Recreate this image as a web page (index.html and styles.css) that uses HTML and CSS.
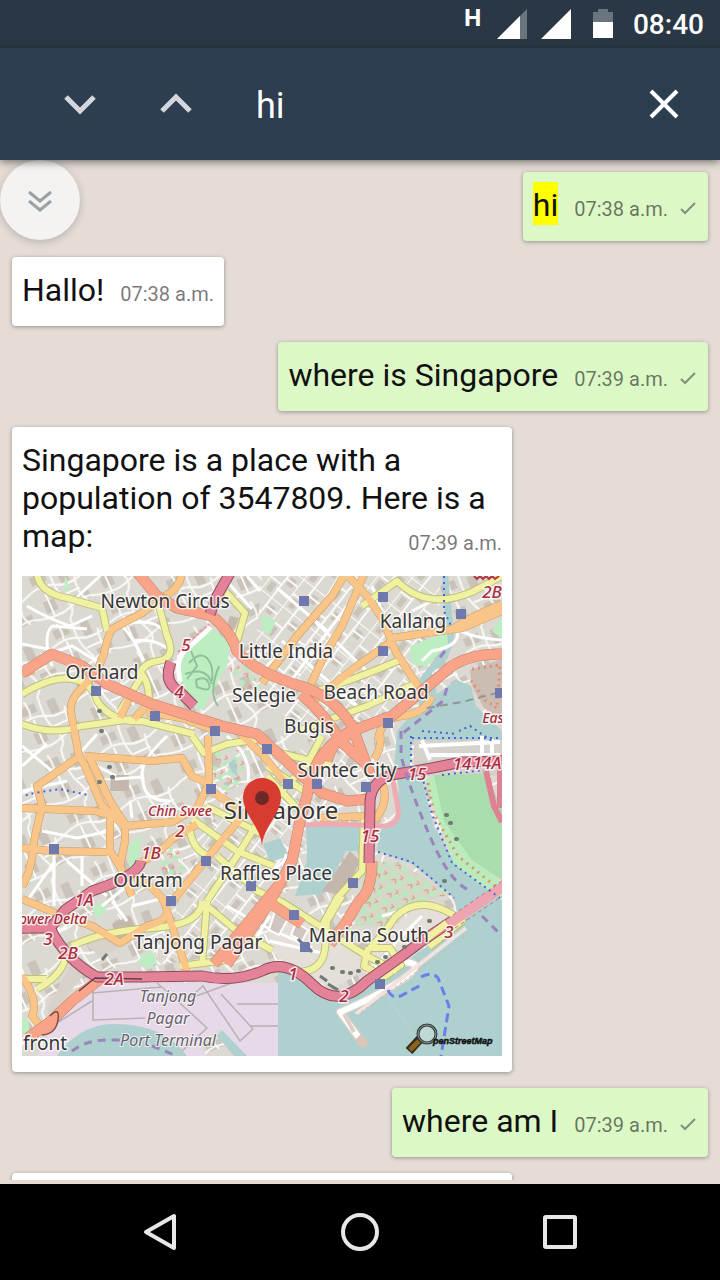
FILE: index.html
```html
<!DOCTYPE html>
<html lang="en">
<head>
<meta charset="utf-8">
<meta name="viewport" content="width=device-width, initial-scale=1">
<title>Chat search</title>
<link rel="stylesheet" href="styles.css">
</head>
<body>
<div class="app">
  <div class="status">
    <span class="network">H</span>
    <svg class="signal" viewBox="0 0 30 30" aria-hidden="true"><path fill="#6b757f" d="M30 0V30H0z"/><path fill="#fff" d="M23 7V30H0z"/></svg>
    <svg class="signal second" viewBox="0 0 30 30" aria-hidden="true"><path fill="#fff" d="M30 0V30H0z"/></svg>
    <svg class="battery" viewBox="0 0 20 30" aria-hidden="true"><path fill="#6b757f" d="M5 0h10v3h5v11H0V3h5z"/><path fill="#fff" d="M0 13h20v16H0z"/></svg>
    <span class="clock">08:40</span>
  </div>
  <header class="search">
    <button class="tool" aria-label="Next match"><svg viewBox="0 0 48 48"><path d="M10 17l14 14 14-14" stroke="#d4d8dc" stroke-width="5"/></svg></button>
    <button class="tool" aria-label="Previous match"><svg viewBox="0 0 48 48"><path d="M10 31l14-14 14 14" stroke="#d4d8dc" stroke-width="5"/></svg></button>
    <input class="query" type="text" aria-label="Search" value="hi">
    <button class="tool" aria-label="Close search"><svg viewBox="0 0 48 48"><path d="M11 11l26 26M37 11L11 37" stroke="#fff" stroke-width="4"/></svg></button>
  </header>
  <main class="chat">
    <button class="jump" aria-label="Scroll to bottom"><svg viewBox="0 0 24 24"><path d="M1 4l11 9 11-9M1 13l11 9 11-9"/></svg></button>
    <div class="messages">
      <article class="bubble sent"><p class="text"><mark>hi</mark></p><time class="time">07:38 a.m.</time><svg class="tick" viewBox="0 0 16 16"><path d="M1 9l4 4L15 3"/></svg></article>
      <article class="bubble"><p class="text">Hallo!</p><time class="time">07:38 a.m.</time></article>
      <article class="bubble sent"><p class="text">where is Singapore</p><time class="time">07:39 a.m.</time><svg class="tick" viewBox="0 0 16 16"><path d="M1 9l4 4L15 3"/></svg></article>
      <article class="bubble card">
        <p class="text">Singapore is a place with a population of 3547809. Here is a <time class="time inset">07:39 a.m.</time>map:</p>
        <svg class="map" viewBox="0 0 480 480" role="img" aria-label="Map of Singapore">
          <defs>
            <pattern id="blocks" width="62" height="58" patternUnits="userSpaceOnUse" patternTransform="rotate(-24)">
              <path class="block" d="M5 5h16v9H5zM33 8h9v15h-9zM8 33h12v12H8zM38 39h17v8H38z"/>
              <path class="lane" d="M0 20Q15 15 28 22T62 20M27 0Q23 25 30 38T27 58M0 48Q20 53 34 47T62 48M48 20Q43 35 50 48M12 0Q15 10 12 18M14 20v30M30 34h18"/>
            </pattern>
            <pattern id="grid" width="34" height="28" patternUnits="userSpaceOnUse" patternTransform="rotate(-52)">
              <path class="block" d="M4 4h10v6H4zM20 17h9v7h-9z"/>
              <path class="lane" d="M0 0H34M0 14H34M0 0V28M17 0V14M25 14V28"/>
            </pattern>
            <pattern id="gardens" width="17" height="15" patternUnits="userSpaceOnUse" patternTransform="rotate(18)">
              <path fill="#b8eabd" d="M1 1h6v5H1zM10 8h5v5h-5z"/><path d="M3 10l4-2 1 4M11 3l3 2-3 2" fill="none" stroke="#e2896f" stroke-width="1"/>
            </pattern>
            <g id="orange">
              <path d="M160-2Q157 13 143 20L120 37 90 53Q84 65 82 78L75 95 60 112Q47 124 49 137L57 180 63 190 80 230 103 250 150 246 175 232 187 208 186 160"/>
              <path d="M110 116L98 142M128 126L112 143M125 136L160 142 192 154M0 98L12 94"/>
              <path d="M323-2L310 20 275 60 240 107M326 0L345 20 360 42 374 76 397 112M342-2L335 15 320 50 302 80 286 114"/>
              <path d="M370 62L440 52 480 35M427 55Q450 40 480 28M370 65L335 90 285 130M410 120Q402 138 380 140T356 165"/>
              <path d="M0 232L73 235 90 240M55 182L15 210 20 230 12 265Q10 295 0 310M63 180L130 185 160 182 170 200 187 208M68 182L88 225 103 248 103 265 98 290 110 320M88 235L88 275 98 290M0 272L30 275 85 276"/>
              <path d="M120 286Q142 274 150 263L175 248M0 323L40 340 70 350 98 367 125 350Q145 345 145 335Q142 315 110 300M145 335L155 365 165 395M0 400Q17 424 10 440L22 455M225 235L195 270 153 322M186 213L215 232M210 150L240 178 262 205M358 158Q360 172 352 183M360 207Q368 225 353 244M298 242L346 240M230 350L205 387"/>
            </g>
            <g id="yellow">
              <path d="M15-2Q18 17 45 22L80 32 85 55M137 30L145 60Q155 82 136 85T118 103L98 135M0 118Q30 100 50 103T75 125Q90 147 120 145L172 158M0 148Q30 160 60 150L110 143M119 97Q127 105 127 125M204 16L223 37 215 65"/>
              <path d="M340 30L375 5Q405 35 450 16L480 0M285 118Q330 105 378 84M275 155L345 130 392 108M170 160L182 177 205 168 245 162"/>
              <path d="M170 243L215 275 252 290M167 248Q169 274 187 280M184 230L240 258M260 215L240 240 215 280 185 325M245 190L290 220M250 175L310 190M300 160L285 188 240 236M342 238L340 295 315 322 300 350M245 200L278 235"/>
              <path d="M50 370Q80 355 130 352T180 325M185 325L180 390M185 330L215 355 250 374M158 390L205 384M45 372Q45 397 15 413M195 280L235 315 260 326 345 380 375 395M320 320L305 345 303 373Q300 396 275 396M345 375Q365 355 373 341Q400 315 440 345L407 371M346 372L368 372 379 389 362 401 342 390 346 372M0 403L25 403"/>
            </g>
            <g id="salmon">
              <path d="M0 97L30 78 60 90 85 108 130 128 200 150 235 158 275 195 300 217 325 225 348 223"/>
              <path d="M115-4L135 20 155 32 190 40Q210 57 215 75Q235 98 285 112Q315 125 330 150L348 198M279 118Q305 140 318 165L344 188"/>
              <path d="M483 78Q450 77 430 90L370 140 325 157Q290 178 285 220L278 245 270 285Q255 315 235 345L205 388M256 310L192 388M337 156Q311 160 305 185"/>
              <path d="M350 285Q350 315 337 325L323 348 308 368M240 322L280 348M78 403L50 425 28 446 6 462"/>
            </g>
            <g id="pink">
              <path d="M208-3L195 20 188 38M149 86Q141 106 157 115L172 130M119 285Q116 300 70 315L43 334 29 351-3 352"/>
              <path d="M0 352L28 352Q43 383 75 401L120 401 180 400Q210 407 240 395Q264 382 290 408T345 405L380 380 400 365 430 345M347 287L348 225Q350 202 375 198L410 192 440 186 483 185"/>
            </g>
          </defs>
          <rect width="480" height="480" fill="#dcd8d2"/>
          <rect width="480" height="480" fill="url(#blocks)"/>
          <path fill="#dcd8d2" d="M240 0H420L410 65 365 145 285 160 230 110z"/><path fill="url(#grid)" d="M240 0H420L410 65 365 145 285 160 230 110z"/>
          <path fill="#dcd8d2" d="M195 235L290 165 330 175 278 280 225 375 130 390z"/><path fill="url(#grid)" d="M195 235L290 165 330 175 278 280 225 375 130 390z"/>
          <path class="park" d="M163 77L188 52 208 66 205 90 190 115 181 135 163 120 158 90zM388 70L425 56 427 67 404 91 390 88zM480 40L470 55 480 63zM240 38L254 45 248 58 240 55zM107 270L120 258 116 285 107 296zM115 385L130 374 135 387 125 392zM70 333l12-8 3 8-10 10zM43 0l5 12-6 4zM0 440l7 5v15l-7-5z"/>
          <path fill="url(#gardens)" d="M190 174H225V200L205 219 190 205zM205 90H225L238 112 225 120zM133 294L153 265 165 288 150 312zM320 335l20 5-15 20z"/>
          <path fill="#c4b8ae" d="M89 199h18v16H88zM90 348l18-8 8 15-20 10zM208 40l9 2-5 12-8-3z"/>
          <path fill="#d8d1ca" d="M25 433L48 390 65 395 28 440zM75 358L103 367 80 382 65 370z"/>
          <path class="water" d="M420 0H426L430 36 432 65 425 83 410 97 415 118 435 104 449 110 454 130 480 155V169L390 165 388 190 400 205 412 250 435 290 480 324V480H256V392L280 398 312 425 350 405 438 350 432 322 390 288 355 275 357 254 374 248 377 210 372 195 375 155 397 130 398 102 413 83 426 68z"/>
          <path class="water" d="M284 248H338L336 275 324 275 302 318 273 320 285 285zM241 268L258 262 267 280 248 286zM206 187l7-4 3 18-7-6z"/>
          <path fill="#c4b8ae" d="M300 315L328 275 338 285 322 320z"/>
          <path fill="#d3d9c6" d="M344 284L378 288 430 318 400 326 365 350 332 350z"/><path fill="url(#gardens)" d="M344 284L378 288 430 318 400 326 365 350 332 350z"/>
          <path fill="#d5d2cc" d="M392 164H480V200H404L392 188z"/>
          <path fill="#e5dfda" d="M350 378L372 350 395 331 420 332 434 344 405 368 378 392zM245 330L300 352 340 382 340 396 312 412 285 402 262 386 248 374z"/>
          <path fill="#cbbdb2" d="M448 94L480 83V145L462 132 450 110z"/>
          <path d="M450 93l28-4-3 43-12-8-15-21" fill="none" stroke="#e68b72" stroke-width="3" stroke-dasharray="2 4"/>
          <path fill="#b9ecba" d="M402 204L415 200 420 220 440 266 480 308V325L432 288z"/>
          <path fill="#aaddad" d="M412 199L462 198 480 230V304L450 284 422 245z"/>
          <path d="M406 207L412 238 436 280 478 314" fill="none" stroke="#e38e70" stroke-width="3" stroke-dasharray="2 5"/>
          <path class="pier" d="M397 170L478 166M408 179H478M400 164l8 20M460 160v20M470 163v18"/>
          <path fill="#e7d9e8" d="M70 407H256V480H225L198 453 178 465 184 480H160Q140 449 92 449 50 452 35 480H15L28 455z"/>
          <path class="water" d="M35 480Q58 448 92 448Q142 448 165 480zM200 454L225 480H212L195 460z"/>
          <path d="M70 417L140 411M71 410V444L123 442M30 450L70 425M135 407L148 418 185 452 160 475M174 420L229 400M165 424L181 410 218 465 231 453 199 418M215 428H256M229 450H256" fill="none" stroke="#b5b3b4" stroke-width="1.5"/>
          <g class="street">
            <path d="M30 50Q20 60 30 90M5 30Q25 42 48 50L70 40M78 0L54 22M0 68L35 75 50 70 78 87M30 50L65 53M97 45L112 65 122 85M105 48Q130 42 142 55M113 65Q130 62 145 72M115 115Q128 130 140 150M0 170L30 195M0 190L25 168M0 215L45 205M20 255L55 262 88 255M32 275V330M5 325L33 285M60 280V310M45 285L85 320"/>
            <path d="M200 0L230 33M225 0L238 15M145 160Q115 188 121 202Q120 225 148 225M205 160Q230 180 226 205M75 158L60 175M120 201L93 203M108 225L110 242M240 95L290 45 318 0M265 110L325 30M260 65L335 130M285 38L345 95M255 12L305 55M350 10L360 35M400 85L410 75Q440 70 435 53Q450 62 480 64M390 35L420 20M80 330L105 310M30 360L45 350M90 325L105 345M110 330L150 320M205 330L240 350M235 300Q265 290 264 278"/>
            <path d="M242 350L290 372M248 340L235 360M346 400L375 365 400 340M360 340L390 332M362 390l30-23M247 365L305 378M75 190L94 200"/>
          </g>
          <path d="M253 335l14 6-10 18-10-5zM274 347l12 7-6 11-11-6z" fill="#d0c6bf" stroke="#fff" stroke-width="2"/>
          <path d="M318 436Q350 423 378 405T382 386M318 436L340 466" fill="none" stroke="#d3d0ca" stroke-width="9" stroke-linecap="round"/>
          <path d="M318 436Q350 423 378 405T382 386M318 436L340 466" fill="none" stroke="#fff" stroke-width="6" stroke-linecap="round"/>
          <path d="M322 438l10 18" stroke="#dbd1c7" stroke-width="4"/><path d="M336 461l8 9" stroke="#dbc4b8" stroke-width="8"/>
          <path d="M334 438L444 352" stroke="#f2e3df" stroke-width="4"/><path d="M334 440L446 358" stroke="#e8a9ab" stroke-dasharray="3 3"/>
          <use href="#yellow" class="case yc"/><use href="#orange" class="case oc"/>
          <use href="#yellow" class="road yf"/><use href="#orange" class="road of"/>
          <path d="M282 249L305 248 363 250Q378 248 376 232L371 205" fill="none" stroke="#efabb3" stroke-width="5"/>
          <use href="#salmon" class="case sc"/><use href="#salmon" class="road sf"/>
          <use href="#pink" class="case pc"/><use href="#pink" class="road pf"/>
          <path d="M427 348L482 310" stroke="#eda6b1" stroke-width="10"/><path d="M425 343L480 305M433 352L482 319" stroke="#cc6c80" stroke-dasharray="4 3"/>
          <path d="M404 363L425 347" stroke="#f3f1a0" stroke-width="7"/>
          <path d="M157 77L188 49" stroke="#e99aa8" stroke-width="5" stroke-dasharray="3 2"/><path d="M158 105Q153 80 165 73L189 51" fill="none" stroke="#fff" stroke-width="5"/>
          <path d="M57 415L73 402 120 403" fill="none" stroke="#68404b" stroke-width="1.5"/><path d="M28 440Q38 430 36 444T20 459" fill="#f9a389" stroke="#7e5149" stroke-width="1.5"/>
          <path d="M464 195L472 230 480 246M478 187v45" fill="none" stroke="#df8194" stroke-width="6"/>
          <path d="M167 87Q178 75 185 82T190 105M163 98Q185 90 190 108M169 75L175 90 165 103M174 104q10-5 13 4t-12 3zM197 90Q186 117 196 130" fill="none" stroke="#8fc29b" stroke-width="2"/>
          <path class="ferry" d="M379 155V180Q390 220 410 265T450 315M425 112L421 125 381 157M423 75L415 85M50 475Q65 464 85 464H110M130 470L155 480M460 340L480 360"/>
          <path d="M405 132L440 126 475 117" fill="none" stroke="#8f979a" stroke-width="2" stroke-dasharray="8 5"/>
          <path class="coast" d="M422 0V35L430 52M389 160V192L398 198M400 200L410 238 430 287 478 322M356 276L390 286 415 307 432 322M390 162H480M420 199L462 194M-2 221L12 217 38 213 66 219M437 155L448 150 470 165M400 155l35 3"/>
          <path d="M366 414q5 12 18 3l15-8M399 401Q410 395 416 402L427 430 419 480" fill="none" stroke="#6b7fe8" stroke-width="3" stroke-dasharray="9 5"/>
          <path d="M364 419L395 464" stroke="#bcd5d0" stroke-width="1"/>
          <path d="M80 384l5-6M298 400l7 5M306 408l10 6M276 363l5 5M285 370l5 6" stroke="#707878" stroke-width="3"/>
          <g class="trees"><path d="M310 392h1M320 396h1M328 397h1M336 395h1M355 386h1M363 381h1M382 371h1M407 345h1M424 239h1M428 247h1M434 263h1M422 305h1M77 206h1M87 191h1M90 201h1M77 135h1M79 155h1"/></g>
          <path class="station" d="M277 20h10v10h-10zM356 16h10v10h-10zM434 33h10v10h-10zM356 70h10v10h-10zM361 142h10v10h-10zM473 112h10v10h-10zM69 110h10v10H69zM128 135h10v10h-10zM188 150h10v10h-10zM240 168h10v10h-10zM261 203h10v10h-10zM290 203h10v10h-10zM339 206h10v10h-10zM184 208h10v10h-10zM27 268h10v10H27zM179 280h10v10h-10zM224 305h10v10h-10zM144 320h10v10h-10zM326 302h10v10h-10zM267 334h10v10h-10zM278 366h10v10h-10zM353 403h10v10h-10z"/>
          <path d="M452 0l3 3 3-3 3 3 3-3 3 3 3-3 3 3 4-3" fill="none" stroke="#b23a4a" stroke-width="2"/>
          <g class="place">
            <text x="143" y="32">Newton Circus</text><text x="391" y="52">Kallang</text><text x="264" y="82">Little India</text><text x="80" y="103">Orchard</text><text x="242" y="126">Selegie</text><text x="354" y="123">Beach Road</text><text x="287" y="157">Bugis</text><text x="325" y="201">Suntec City</text><text class="city" x="259" y="243">Singapore</text><text x="126" y="311">Outram</text><text x="254" y="304">Raffles Place</text><text x="176" y="373">Tanjong Pagar</text><text x="347" y="366">Marina South</text><text x="23" y="474">front</text>
          </g>
          <g class="exit">
            <text class="small" x="158" y="240">Chin Swee</text><text class="small" x="31" y="348">ower Delta</text><text x="470" y="22">2B</text><text class="small" x="471" y="147">Eas</text><text x="440" y="194">14</text><text x="465" y="193">14A</text><text x="395" y="204">15</text><text x="348" y="266">15</text><text x="427" y="362">3</text><text x="322" y="426">2</text><text x="271" y="404">1</text><text x="92" y="409">2A</text><text x="46" y="383">2B</text><text x="26" y="369">3</text><text x="62" y="330">1A</text><text x="129" y="283">1B</text><text x="158" y="261">2</text><text x="164" y="75">5</text><text x="157" y="122">4</text>
          </g>
          <g class="port"><text x="146" y="426">Tanjong</text><text x="146" y="448">Pagar</text><text x="146" y="470">Port Terminal</text></g>
          <path d="M398 463L387 475" stroke="#332c18" stroke-width="9"/><path d="M397 465L388 474" stroke="#8a641e" stroke-width="5"/>
          <circle cx="405" cy="458" r="9" fill="#c9dddb" fill-opacity=".6" stroke="#303a3a" stroke-width="3"/><circle cx="405" cy="458" r="9" fill="none" stroke="#8b9696"/>
          <text class="credit" x="411" y="468">penStreetMap</text>
          <path fill="#d83c31" d="M240 270C239 252 221 238 221 221a19 19 0 0 1 38 0C259 238 241 252 240 270z"/><circle cx="240" cy="222" r="7" fill="#6d2926"/>
        </svg>
      </article>
      <article class="bubble sent"><p class="text">where am I</p><time class="time">07:39 a.m.</time><svg class="tick" viewBox="0 0 16 16"><path d="M1 9l4 4L15 3"/></svg></article>
      <article class="bubble card"></article>
    </div>
  </main>
  <nav class="system">
    <button aria-label="Back"><svg viewBox="0 0 48 48"><path d="M38 8v32L10 24z"/></svg></button>
    <button aria-label="Home"><svg viewBox="0 0 48 48"><circle cx="24" cy="24" r="17"/></svg></button>
    <button aria-label="Recent apps"><svg viewBox="0 0 48 48"><rect x="9" y="9" width="30" height="30" rx="1"/></svg></button>
  </nav>
</div>
</body>
</html>
```
FILE: styles.css
```css
* { box-sizing: border-box; }
body { margin: 0; font-family: Roboto, "Liberation Sans", sans-serif; background: #e5dcd6; }
button { border: 0; padding: 0; background: none; display: flex; align-items: center; justify-content: center; cursor: pointer; }
.app { display: flex; flex-direction: column; height: 100vh; overflow: hidden; }

.status { flex: none; height: 48px; padding: 0 16px; display: flex; align-items: center; justify-content: flex-end; background: #2a3846; color: #fff; }
.network { align-self: flex-start; font: 700 24px/34px "Open Sans", sans-serif; margin-right: 15px; }
.signal { width: 30px; height: 30px; margin-right: 14px; }
.signal.second { margin-right: 22px; }
.battery { width: 20px; height: 30px; margin-right: 20px; }
.clock { font-size: 28px; font-weight: 500; line-height: 34px; padding-top: 2px; }

.search { flex: none; position: relative; z-index: 2; height: 112px; padding: 0 8px 0 32px; display: flex; align-items: center; background: #2c3e50; box-shadow: 0 2px 8px rgba(0, 0, 0, .5); }
.tool { flex: none; width: 96px; height: 96px; }
.tool svg { width: 48px; height: 48px; fill: none; }
.query { flex: 1; min-width: 0; padding: 4px 0 0 32px; border: 0; outline: 0; background: none; color: #fff; font: 36px/48px Roboto, sans-serif; }

.chat { position: relative; flex: 1; min-height: 0; padding-bottom: 4px; }
.messages { height: 100%; overflow: hidden; padding: 12px; display: flex; flex-direction: column; align-items: flex-start; gap: 16px; }
.jump { position: absolute; top: 0; left: 0; width: 80px; height: 80px; border-radius: 50%; background: #f4f3f1; box-shadow: 0 2px 8px rgba(0, 0, 0, .2); }
.jump svg { width: 24px; height: 24px; fill: none; stroke: #9aa0a3; stroke-width: 3; }

.bubble { flex: none; max-width: 72%; padding: 14px 10px 17px; display: flex; align-items: baseline; border-radius: 4px; background: #fff; box-shadow: 0 1px 4px rgba(0, 0, 0, .35); }
.bubble.sent { align-self: flex-end; background: #dcf8c6; padding-right: 12px; }
.bubble.card { display: block; width: 500px; min-height: 120px; padding-bottom: 16px; }
.text { margin: 0; font-size: 32px; line-height: 38px; color: #111; }
.text mark { padding: 4px 0 1px; background: #ff0; color: #111; }
.time { margin-left: 16px; font-size: 20px; line-height: 24px; color: rgba(0, 0, 0, .54); white-space: nowrap; }
.time.inset { float: right; margin-top: 14px; }
.tick { flex: none; width: 16px; height: 16px; margin-left: 12px; fill: none; stroke: #83907e; stroke-width: 2; }

.map { display: block; width: 100%; height: auto; margin-top: 21px; font-family: "Noto Sans", sans-serif; overflow: hidden; }
.block { fill: #c9c3b9; }
.lane { fill: none; stroke: #fafaf8; stroke-width: 2; }
.street { fill: none; stroke: #fff; stroke-width: 3; }
.park { fill: #bdeec1; }
.water { fill: #aed1d0; }
.pier { fill: none; stroke: #fff; stroke-width: 4; }
.case, .road { fill: none; stroke-linejoin: round; }
.yc { stroke: #bcc078; stroke-width: 8px; }
.yf { stroke: #f0f1a1; stroke-width: 6px; }
.oc { stroke: #c99c62; stroke-width: 8px; }
.of { stroke: #f9c588; stroke-width: 7px; }
.sc { stroke: #bd8370; stroke-width: 11px; }
.sf { stroke: #f9a389; stroke-width: 10px; }
.pc { stroke: #8e4b5e; stroke-width: 11px; }
.pf { stroke: #e48398; stroke-width: 9px; }
.ferry { fill: none; stroke: #9b83bd; stroke-width: 3; stroke-dasharray: 8 6; }
.coast { fill: none; stroke: #4762dc; stroke-width: 2; stroke-dasharray: 2 4; }
.trees { stroke: #6f7a70; stroke-width: 4; stroke-linecap: round; }
.station { fill: #6f79ae; }
.place, .exit, .port { text-anchor: middle; paint-order: stroke; stroke: rgba(255, 255, 255, .75); stroke-width: 3px; stroke-linejoin: round; }
.place { font-size: 19px; fill: #363636; }
.place .city { font-size: 24px; }
.exit { font-size: 17px; font-style: italic; font-weight: 500; fill: #a92b3c; }
.exit .small { font-size: 14px; }
.port { font-size: 16px; font-style: italic; fill: #67616b; stroke-width: 2px; }
.credit { font-family: "Liberation Sans", sans-serif; font-size: 9px; font-weight: 700; font-style: italic; fill: #111; stroke: #111; stroke-width: .5px; }

.system { flex: none; height: 96px; padding: 0 60px; display: flex; background: #000; }
.system button { flex: 1; }
.system svg { width: 48px; height: 48px; fill: none; stroke: #e8e8e8; stroke-width: 4; stroke-linejoin: round; }
```
